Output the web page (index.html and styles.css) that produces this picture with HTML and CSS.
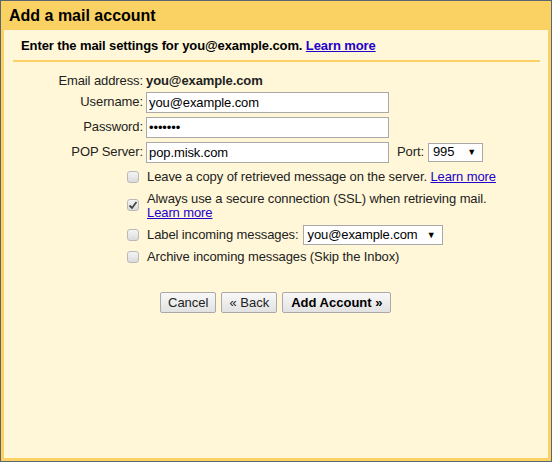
FILE: index.html
```html
<!DOCTYPE html>
<html>
<head>
<meta charset="utf-8">
<link rel="stylesheet" href="styles.css">
</head>
<body>
<div class="frame">
  <div class="title">Add a mail account</div>
  <div class="panel">
    <div class="intro">Enter the mail settings for you@example.com. <a href="#">Learn more</a></div>
    <div class="sep"></div>
    <div class="form">
      <div class="lbl">Email address:</div>
      <div class="val"><b>you@example.com</b></div>
      <div class="lbl">Username:</div>
      <div class="val"><input class="txt" type="text" value="you@example.com"></div>
      <div class="lbl">Password:</div>
      <div class="val"><input class="txt" type="password" value="1234567"></div>
      <div class="lbl">POP Server:</div>
      <div class="val"><input class="txt" type="text" value="pop.misk.com"><span class="port">Port:</span><span class="sel port-sel">995<span class="arrow">▼</span></span></div>
    </div>
    <div class="opts">
      <div class="opt"><span class="cb"></span><span>Leave a copy of retrieved message on the server. <a href="#">Learn more</a></span></div>
      <div class="opt"><span class="cb checked"><svg width="10" height="10" viewBox="0 0 10 10"><path d="M1.5 5.5 L4 8 L8.5 2" fill="none" stroke="#444" stroke-width="1.8"/></svg></span><span>Always use a secure connection (SSL) when retrieving mail.<br><a href="#">Learn more</a></span></div>
      <div class="opt"><span class="cb"></span><span>Label incoming messages:</span><span class="sel lbl-sel">you@example.com<span class="arrow">▼</span></span></div>
      <div class="opt"><span class="cb"></span><span>Archive incoming messages (Skip the Inbox)</span></div>
    </div>
    <div class="buttons">
      <button class="btn">Cancel</button>
      <button class="btn">« Back</button>
      <button class="btn primary">Add Account »</button>
    </div>
  </div>
</div>
</body>
</html>
```
FILE: styles.css
```css
html, body {
  margin: 0;
  padding: 0;
}
body {
  font-family: "Liberation Sans", Arial, sans-serif;
  font-size: 13px;
  color: #222;
}
.frame {
  width: 552px;
  height: 462px;
  box-sizing: border-box;
  border: 1px solid #5b6770;
  background: #fad163;
  padding: 0 3px 3px 3px;
  display: flex;
  flex-direction: column;
}
.title {
  height: 29px;
  line-height: 30px;
  padding-left: 5px;
  font-size: 16px;
  font-weight: bold;
  color: #000;
}
.panel {
  flex: 1;
  background: #fff7d8;
  letter-spacing: -0.1px;
}
.intro {
  font-weight: bold;
  padding: 8px 0 0 17px;
  height: 17px;
  line-height: 15px;
  color: #000;
}
a {
  color: #2200cc;
}
.sep {
  height: 2px;
  background: #fad163;
  margin: 5px 8px 0 9px;
}
.form {
  display: grid;
  grid-template-columns: 139px auto;
  column-gap: 3px;
  row-gap: 3px;
  margin-top: 12px;
  align-items: center;
}
.lbl {
  text-align: right;
  height: 22px;
  line-height: 22px;
}
.val {
  height: 22px;
  line-height: 22px;
  display: flex;
  align-items: center;
}
.val b {
  color: #222;
}
.form > .lbl:first-child, .form > .lbl:first-child + .val {
  height: 14px;
  line-height: 14px;
}
.txt {
  box-sizing: border-box;
  width: 243px;
  height: 21px;
  border: 1px solid #a9a9a9;
  background: #fff;
  padding: 0 2px;
  margin: 0;
  font-family: "Liberation Sans", Arial, sans-serif;
  font-size: 13px;
  letter-spacing: -0.1px;
  color: #000;
  outline: none;
}
.port {
  margin-left: 8px;
  margin-right: 4px;
}
.sel {
  box-sizing: border-box;
  display: inline-flex;
  align-items: center;
  justify-content: space-between;
  height: 19px;
  border: 1px solid #a9a9a9;
  background: #fff;
  padding: 0 6px 0 4px;
  color: #000;
}
.port-sel {
  width: 55px;
}
.arrow {
  font-size: 9px;
  line-height: 1;
}
.opts {
  margin-top: 7px;
  padding-left: 123px;
  display: flex;
  flex-direction: column;
  row-gap: 8px;
}
.opt {
  display: flex;
  align-items: flex-start;
  line-height: 14px;
}
.cb {
  box-sizing: border-box;
  width: 12px;
  height: 12px;
  margin: 1px 8px 0 0;
  border: 1px solid #b9b9b9;
  border-radius: 3px;
  background: linear-gradient(#f4f4f4, #dcdcdc);
  display: flex;
  align-items: center;
  justify-content: center;
  flex: none;
}
.cb.checked {
  margin-top: 7px;
}
.lbl-sel {
  width: 140px;
  margin-left: 4px;
  margin-top: -3px;
  margin-bottom: -3px;
  height: 20px;
}
.buttons {
  display: flex;
  justify-content: flex-start;
  gap: 5px;
  margin-top: 28px;
  padding-left: 156px;
}
.btn {
  height: 21px;
  box-sizing: border-box;
  border: 1px solid #a9a9a9;
  border-radius: 2px;
  background: linear-gradient(#f8f8f8, #e2e2e2);
  font-family: "Liberation Sans", Arial, sans-serif;
  font-size: 13px;
  color: #222;
  padding: 0 7px;
  margin: 0;
}
.btn.primary {
  font-weight: bold;
  color: #000;
  padding: 0 8px;
}
```
